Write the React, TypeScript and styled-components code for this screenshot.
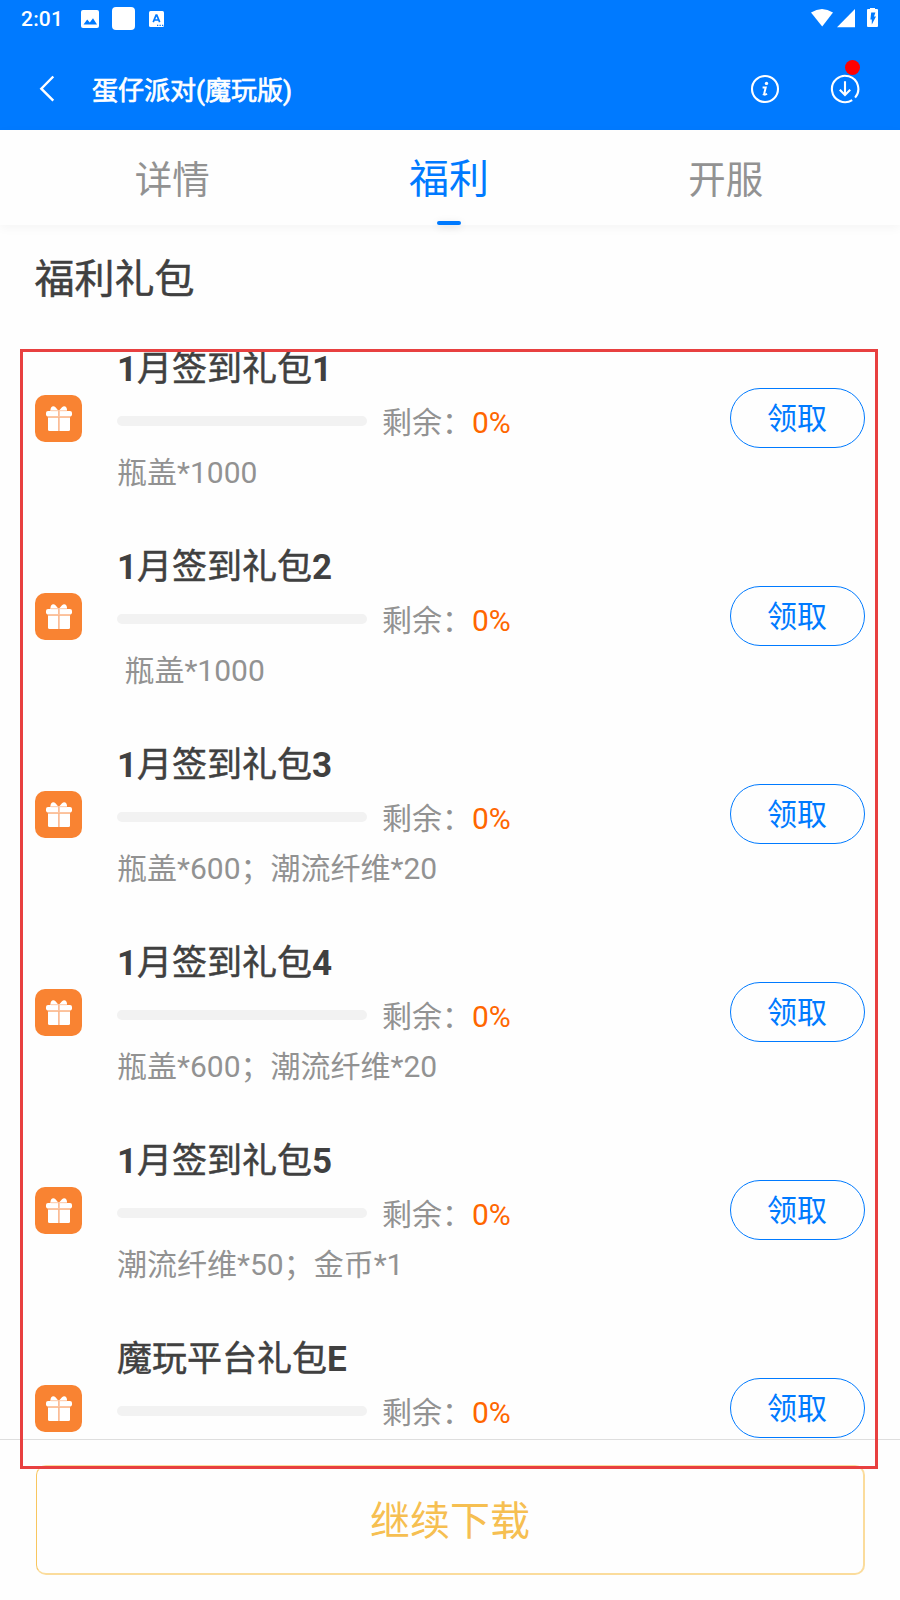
import React from 'react';
import styled, { createGlobalStyle } from 'styled-components';

const BLUE = '#007aff';

const GlobalStyle = createGlobalStyle`
  * { box-sizing: border-box; }
  body {
    margin: 0;
    background: #fefefe;
    font-family: Roboto, 'Noto Sans CJK SC', sans-serif;
  }
`;

const Screen = styled.div`
  position: relative;
  width: 900px;
  height: 1600px;
  overflow: hidden;
  display: flex;
  flex-direction: column;
  background: #fefefe;
`;

const TopArea = styled.header`
  flex: none;
  height: 130px;
  background: ${BLUE};
  color: #fff;
`;

const StatusBar = styled.div`
  height: 37px;
  padding: 0 20px 0 21px;
  display: flex;
  align-items: center;
  justify-content: space-between;
`;

const StatusLeft = styled.div`
  display: flex;
  align-items: center;
`;

const Clock = styled.span`
  width: 60px;
  font-size: 21px;
  line-height: 24px;
  font-weight: 500;
  letter-spacing: 0.2px;
`;

const BlankApp = styled.span`
  width: 23px;
  height: 23px;
  margin: 0 14px 0 13px;
  border-radius: 4px;
  background: #fff;
`;

const NavBar = styled.div`
  height: 93px;
  padding: 11px 40px 0 38px;
  display: flex;
  align-items: center;
`;

const NavTitle = styled.h1`
  flex: 1;
  margin: 3px 0 0 37px;
  font-size: 26px;
  line-height: 36px;
  font-weight: 400;
  -webkit-text-stroke: 0.7px #fff;
`;

const DownloadAction = styled.div`
  position: relative;
  display: flex;
  margin-left: 50px;
`;

const AlertDot = styled.span`
  position: absolute;
  top: -14px;
  right: 0;
  width: 15px;
  height: 15px;
  border-radius: 50%;
  background: #f00;
`;

const Tabs = styled.nav`
  position: relative;
  flex: none;
  height: 95px;
  padding: 0 36px 0 34px;
  display: flex;
  background: #fefefe;
  box-shadow: 0 3px 10px rgba(0, 0, 0, 0.04);
`;

const Tab = styled.div<{ $active?: boolean }>`
  flex: 1;
  display: flex;
  flex-direction: column;
  align-items: center;
  justify-content: space-between;
  padding-top: 26px;
  font-size: ${(p) => (p.$active ? 40 : 37.5)}px;
  line-height: 48px;
  color: ${(p) => (p.$active ? BLUE : '#929292')};
`;

const TabMark = styled.span`
  width: 24px;
  height: 4px;
  border-radius: 2px;
  background: ${BLUE};
  box-shadow: 0 2px 8px rgba(0, 0, 0, 0.12);
`;

const SectionTitle = styled.h2`
  flex: none;
  height: 121px;
  margin: 0;
  padding: 30px 0 0 34.5px;
  font-size: 40px;
  line-height: 50px;
  font-weight: 400;
  color: #404040;
  -webkit-text-stroke: 0.5px #404040;
`;

const GiftList = styled.ul`
  flex: none;
  height: 1093px;
  margin: 0;
  padding: 5px 35px 0;
  overflow: hidden;
  display: flex;
  flex-direction: column;
  gap: 58px;
  list-style: none;
`;

const GiftRow = styled.li`
  flex: none;
  height: 140px;
  display: flex;
  align-items: flex-start;
`;

const GiftBadge = styled.span`
  width: 47px;
  height: 47px;
  margin: 44px 35px 0 0;
  border-radius: 10px;
  background: #f98332;
`;

const GiftInfo = styled.div`
  flex: 1;
`;

const GiftName = styled.h3`
  margin: 0;
  font-size: 35px;
  line-height: 37px;
  font-weight: 400;
  color: #404040;
  -webkit-text-stroke: 0.5px #404040;
`;

const Latin = styled.span`
  font-weight: 700;
  -webkit-text-stroke: 0;
`;

const Stock = styled.div`
  display: flex;
  align-items: center;
  margin: 17px 0 14px;
  font-size: 30px;
  line-height: 36px;
  color: #929292;
`;

const StockBar = styled.span`
  width: 250px;
  height: 10px;
  margin: 0 15px 4px 0;
  border-radius: 5px;
  background: #f2f2f2;
`;

const Percent = styled.span`
  color: #ff6600;
`;

const GiftDetail = styled.p`
  margin: 0;
  font-size: 30px;
  line-height: 36px;
  color: #929292;
  white-space: pre;
`;

const ClaimButton = styled.button`
  width: 135px;
  height: 60px;
  margin: 37px 0 0;
  padding: 2px 1px 0 0;
  border: 1px solid ${BLUE};
  border-radius: 30px;
  background: none;
  font: 30px/40px Roboto, 'Noto Sans CJK SC', sans-serif;
  color: ${BLUE};
`;

const Footer = styled.footer`
  flex: 1;
  padding: 25px 35px 0;
  border-top: 1px solid #dedede;
`;

const DownloadButton = styled.button`
  display: block;
  width: 829px;
  height: 110px;
  margin-left: 1px;
  padding: 4px 0 0;
  border: 2px solid #fbdc9c;
  border-left: 1.5px solid #f8c65f;
  border-radius: 10px;
  background: none;
  font: 40px/50px Roboto, 'Noto Sans CJK SC', sans-serif;
  color: #f6bf51;
`;

const Highlight = styled.div`
  position: absolute;
  left: 20px;
  top: 349px;
  width: 858px;
  height: 1119.5px;
  border: 3px solid #e84040;
  pointer-events: none;
`;

const ImageIcon = () => (
  <svg width="18" height="18" viewBox="0 0 18 18">
    <rect width="18" height="18" rx="2" fill="#fff" />
    <path d="M2.5 14.5 6.2 9.5 8.8 12.5 12 8.2 16 14.5Z" fill={BLUE} />
  </svg>
);

const KeyboardIcon = () => (
  <svg width="15" height="16" viewBox="0 0 15 16">
    <rect width="15" height="16" rx="1.5" fill="#fff" />
    <path d="M4.2 11.2 7.1 4.2h.7l2.9 7M5.3 9h4.2" fill="none" stroke={BLUE} strokeWidth="1.7" />
    <path d="M8 14.3h1.3M10.5 14.3h1.3M13 14.3h1.3" stroke={BLUE} strokeWidth="1.3" />
  </svg>
);

const SignalIcons = () => (
  <svg width="70" height="22" viewBox="0 0 70 22">
    <path d="M1 4.5Q12 -2.5 23 4.5L12.2 18.4Z" fill="#fff" />
    <path d="M27 19.2 45 1V19.2Z" fill="#fff" />
    <path
      d="M60 -.6h5v1.7h2a1 1 0 0 1 1 1v16a1 1 0 0 1-1 1h-9a1 1 0 0 1-1-1v-16a1 1 0 0 1 1-1h2Z"
      fill="#fff"
    />
    <path d="M61.2 4.5h4.2l-1.4 4h2L61.8 16.6v-5.1H60.4Z" fill={BLUE} />
  </svg>
);

const BackIcon = () => (
  <svg width="17" height="28" viewBox="0 0 17 28">
    <path d="M15.3 1.5 3.3 13.7l12 12" fill="none" stroke="#fff" strokeWidth="2.4" />
  </svg>
);

const InfoIcon = () => (
  <svg width="30" height="30" viewBox="0 0 30 30" fill="none" stroke="#fff">
    <circle cx="15" cy="15" r="13" strokeWidth="2.1" />
    <circle cx="16.5" cy="9.4" r="1.7" fill="#fff" stroke="none" />
    <path d="M12.6 13.4h3.1l-1.5 6.2c-.3 1.4 1.2 1.2 2.8.1" strokeWidth="2" />
    <path d="M12.6 20.7h3" strokeWidth="1" />
  </svg>
);

const DownloadIcon = () => (
  <svg width="30" height="30" viewBox="0 0 30 30" fill="none" stroke="#fff" strokeWidth="2.1">
    <path d="M25.1 23.6A13.2 13.2 0 1 0 22.2 26.1" />
    <path d="M15 7.2v13.6M9.8 15.8 15 21l5.2-5.2" />
  </svg>
);

const GiftIcon = () => (
  <svg width="47" height="47" viewBox="0 0 47 47">
    <path d="M15.5 16C15 12 18 10 20.5 12.2L23.7 16L27 12.2C29.5 10 32.5 12 32 16Z" fill="#fff" />
    <rect x="11" y="16" width="26" height="5.5" rx="2" fill="#fff" />
    <path d="M13 22.5h22v12a1.5 1.5 0 0 1-1.5 1.5h-19a1.5 1.5 0 0 1-1.5-1.5Z" fill="#fff" />
    <path d="M23.9 16v20" stroke="#fbb184" strokeWidth="1.5" />
    <path d="M16 15.7h16M12.5 21.7h23" stroke="#fcc7a5" strokeWidth="1" />
  </svg>
);

interface Gift {
  name: string;
  prefix?: string;
  suffix: string;
  detail: string;
}

const gifts: Gift[] = [
  { prefix: '1', name: '月签到礼包', suffix: '1', detail: '瓶盖*1000' },
  { prefix: '1', name: '月签到礼包', suffix: '2', detail: ' 瓶盖*1000' },
  { prefix: '1', name: '月签到礼包', suffix: '3', detail: '瓶盖*600\uFF1B潮流纤维*20' },
  { prefix: '1', name: '月签到礼包', suffix: '4', detail: '瓶盖*600\uFF1B潮流纤维*20' },
  { prefix: '1', name: '月签到礼包', suffix: '5', detail: '潮流纤维*50\uFF1B金币*1' },
  { name: '魔玩平台礼包', suffix: 'E', detail: '' },
];

export default function App() {
  return (
    <Screen>
      <GlobalStyle />
      <TopArea>
        <StatusBar>
          <StatusLeft>
            <Clock>2:01</Clock>
            <ImageIcon />
            <BlankApp />
            <KeyboardIcon />
          </StatusLeft>
          <SignalIcons />
        </StatusBar>
        <NavBar>
          <BackIcon />
          <NavTitle>蛋仔派对(魔玩版)</NavTitle>
          <InfoIcon />
          <DownloadAction>
            <DownloadIcon />
            <AlertDot />
          </DownloadAction>
        </NavBar>
      </TopArea>
      <Tabs>
        <Tab>详情</Tab>
        <Tab $active>
          福利
          <TabMark />
        </Tab>
        <Tab>开服</Tab>
      </Tabs>
      <SectionTitle>福利礼包</SectionTitle>
      <GiftList>
        {gifts.map((gift) => (
          <GiftRow key={gift.name + gift.suffix}>
            <GiftBadge>
              <GiftIcon />
            </GiftBadge>
            <GiftInfo>
              <GiftName>
                {gift.prefix && <Latin>{gift.prefix}</Latin>}
                {gift.name}
                <Latin>{gift.suffix}</Latin>
              </GiftName>
              <Stock>
                <StockBar />
                {'剩余\uFF1A'}
                <Percent>0%</Percent>
              </Stock>
              <GiftDetail>{gift.detail}</GiftDetail>
            </GiftInfo>
            <ClaimButton>领取</ClaimButton>
          </GiftRow>
        ))}
      </GiftList>
      <Footer>
        <DownloadButton>继续下载</DownloadButton>
      </Footer>
      <Highlight />
    </Screen>
  );
}
